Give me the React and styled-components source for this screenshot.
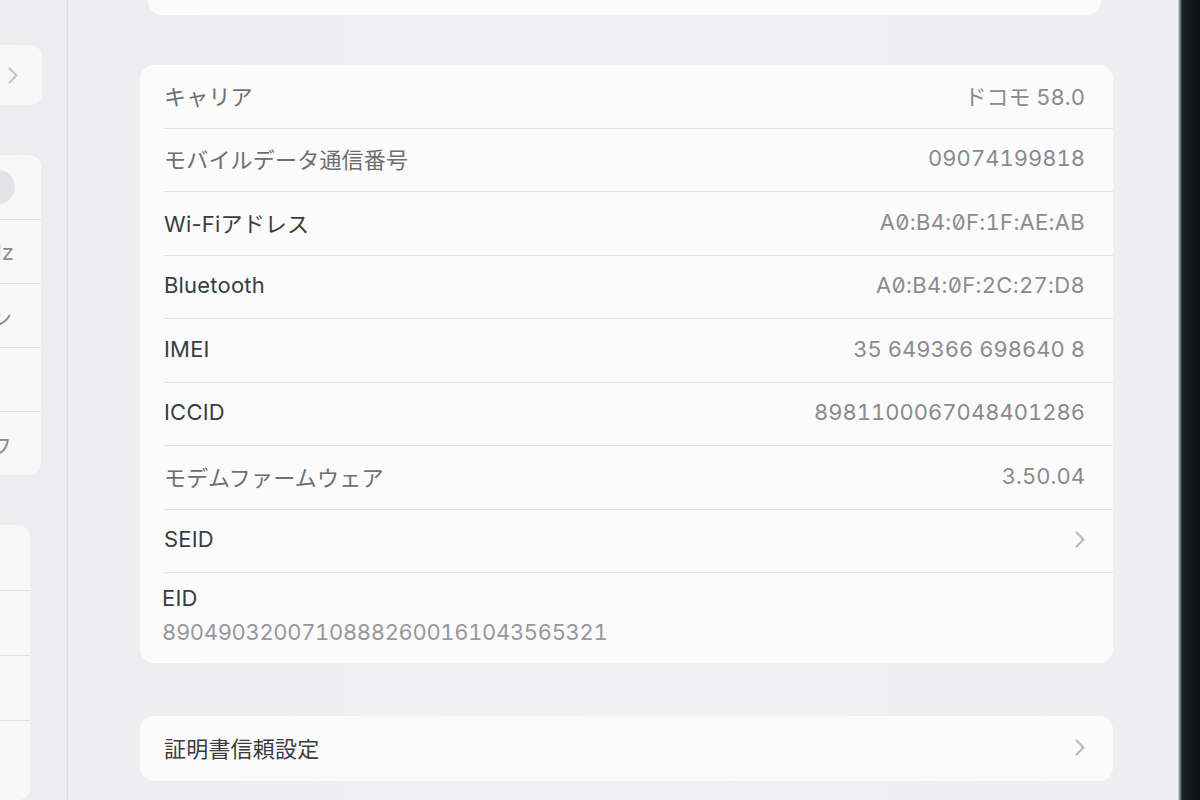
import React from "react";
import styled, { createGlobalStyle } from "styled-components";

const Global = createGlobalStyle`
  html, body { margin: 0; padding: 0; }
  body {
    background: #ececef;
    font-family: "Inter", "Noto Sans CJK JP", sans-serif;
    -webkit-font-smoothing: antialiased;
  }
`;

const Screen = styled.div`
  width: 1200px;
  height: 800px;
  display: flex;
  overflow: hidden;
  background: linear-gradient(90deg, #ededf0 0%, #f1f1f3 40%, #efeff1 100%);
`;

const Sidebar = styled.aside`
  width: 67px;
  flex: none;
  border-right: 1px solid #dcdce0;
  display: flex;
  flex-direction: column;
  gap: 50px;
  padding-top: 45px;
  overflow: hidden;
`;

const SideCard = styled.div`
  width: ${(p) => p.$w}px;
  background: #f8f8f9;
  border-radius: 0 12px 12px 0;
  display: flex;
  flex-direction: column;
  flex: ${(p) => (p.$grow ? 1 : "none")};
`;

const SideRow = styled.div`
  height: ${(p) => p.$h || 64}px;
  display: flex;
  align-items: center;
  justify-content: flex-end;
  padding-right: ${(p) => p.$pr ?? 26}px;
  border-top: ${(p) => (p.$first ? "none" : "1px solid #e2e2e5")};
  box-sizing: border-box;
  overflow: hidden;
  white-space: nowrap;
  font-size: 22px;
  color: #8c8c8e;
`;

const Knob = styled.div`
  width: 36px;
  height: 34px;
  border-radius: 18px;
  background: #e3e3e6;
  flex: none;
`;

const Content = styled.main`
  flex: 1;
  display: flex;
  flex-direction: column;
  padding: 0 65px 0 72px;
`;

const Card = styled.section`
  background: #fbfbfc;
  border-radius: 14px;
  display: flex;
  flex-direction: column;
  margin-top: ${(p) => p.$mt || 0}px;
  overflow: hidden;
`;

const TopStub = styled(Card)`
  height: 15px;
  border-radius: 0 0 14px 14px;
  margin: 0 12px 0 8px;
`;

const Row = styled.div`
  height: ${(p) => p.$h || 63.5}px;
  display: flex;
  align-items: center;
  padding-left: 24px;
  box-sizing: border-box;
`;

const RowInner = styled.div`
  flex: 1;
  align-self: stretch;
  display: flex;
  align-items: center;
  justify-content: space-between;
  padding-right: 28px;
  padding-bottom: 3px;
  border-bottom: ${(p) => (p.$last ? "none" : "1px solid #e1e1e4")};
`;

const Label = styled.span`
  font-size: 22px;
  color: ${(p) => (p.$soft ? "#6e6e70" : "#3c3c3e")};
  letter-spacing: 0.2px;
`;

const Value = styled.span`
  font-size: 22px;
  color: #8b8b8d;
  font-feature-settings: "tnum" 1, "zero" ${(p) => (p.$mono ? 1 : 0)};
  letter-spacing: ${(p) => (p.$mono ? "0.3px" : "0")};
`;

const StackRow = styled.div`
  display: flex;
  flex-direction: column;
  padding: 12px 24px 18px 22px;
  gap: 8px;
`;

const LongValue = styled.span`
  font-size: 22px;
  color: #98989a;
  font-feature-settings: "tnum" 1;
  letter-spacing: -0.35px;
`;

const Bezel = styled.div`
  width: 22px;
  flex: none;
  background: linear-gradient(90deg, #d8dce4 0px, #7d8591 2px, #1d2226 4px, #0b0d0e 100%);
`;

const Chevron = ({ color = "#b8b8bb" }) => (
  <svg width="10" height="17" viewBox="0 0 10 17" fill="none">
    <path d="M1.5 1.5 L8.5 8.5 L1.5 15.5" stroke={color} strokeWidth="2" strokeLinecap="round" strokeLinejoin="round" />
  </svg>
);

const rows = [
  { label: "キャリア", value: "ドコモ 58.0", soft: true },
  { label: "モバイルデータ通信番号", value: "09074199818", soft: true },
  { label: "Wi-Fiアドレス", value: "A0:B4:0F:1F:AE:AB", mono: true },
  { label: "Bluetooth", value: "A0:B4:0F:2C:27:D8", mono: true },
  { label: "IMEI", value: "35 649366 698640 8" },
  { label: "ICCID", value: "8981100067048401286" },
  { label: "モデムファームウェア", value: "3.50.04", soft: true },
  { label: "SEID", chevron: true },
];

export default function App() {
  return (
    <>
      <Global />
      <Screen>
        <Sidebar>
          <SideCard $w={42}>
            <SideRow $first $h={60} $pr={24}>
              <Chevron color="#c4c4c7" />
            </SideRow>
          </SideCard>
          <SideCard $w={41}>
            <SideRow $first $pr={26}>
              <Knob />
            </SideRow>
            <SideRow $pr={27}>5 GHz</SideRow>
            <SideRow $pr={29}>オン</SideRow>
            <SideRow $pr={29}></SideRow>
            <SideRow $pr={29}>オフ</SideRow>
          </SideCard>
          <SideCard $w={30} $grow>
            <SideRow $first $h={65}></SideRow>
            <SideRow $h={65}></SideRow>
            <SideRow $h={65}></SideRow>
            <SideRow $h={65}></SideRow>
          </SideCard>
        </Sidebar>
        <Content>
          <TopStub />
          <Card $mt={50}>
            {rows.map((r) => (
              <Row key={r.label}>
                <RowInner>
                  <Label $soft={r.soft}>{r.label}</Label>
                  {r.chevron ? <Chevron /> : <Value $mono={r.mono}>{r.value}</Value>}
                </RowInner>
              </Row>
            ))}
            <StackRow>
              <Label>EID</Label>
              <LongValue>89049032007108882600161043565321</LongValue>
            </StackRow>
          </Card>
          <Card $mt={53}>
            <Row $h={65}>
              <RowInner $last>
                <Label>証明書信頼設定</Label>
                <Chevron />
              </RowInner>
            </Row>
          </Card>
        </Content>
        <Bezel />
      </Screen>
    </>
  );
}
